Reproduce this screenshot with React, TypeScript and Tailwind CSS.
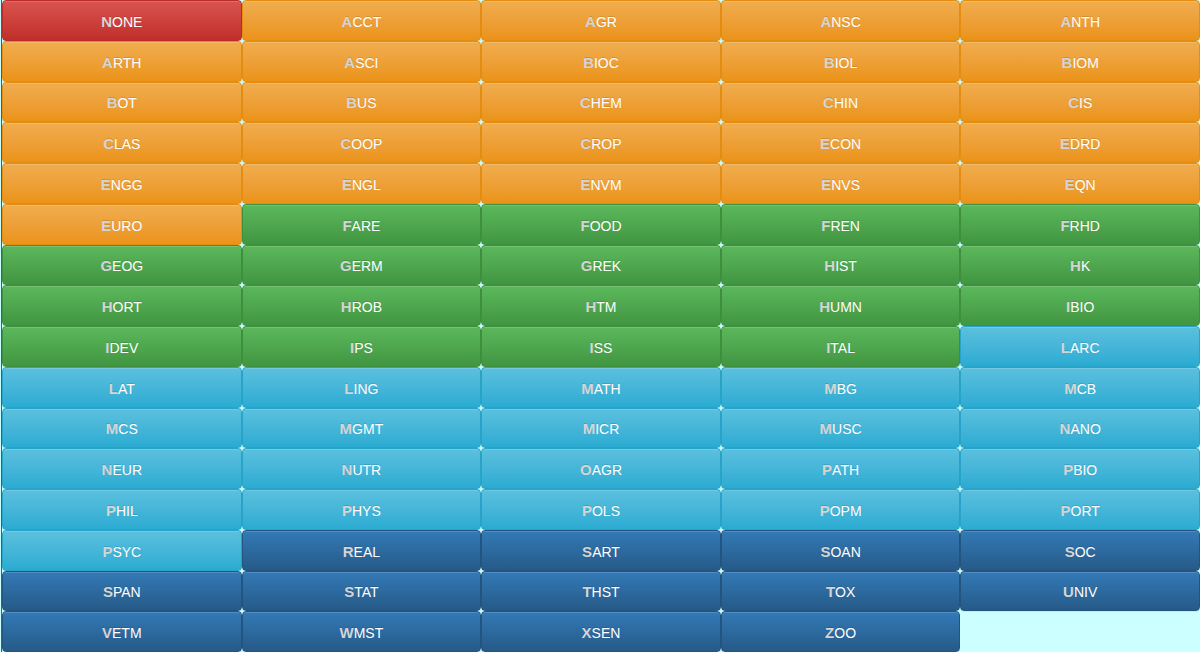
const groups: { cls: string; items: string[] }[] = [
  {
    cls: 'bg-gradient-to-b from-[#d9534f] to-[#c12e2a] border-[#b92c28]',
    items: ['NONE'],
  },
  {
    cls: 'bg-gradient-to-b from-[#f0ad4e] to-[#eb9316] border-[#e38d13]',
    items: [
      'ACCT', 'AGR', 'ANSC', 'ANTH', 'ARTH', 'ASCI', 'BIOC', 'BIOL', 'BIOM', 'BOT',
      'BUS', 'CHEM', 'CHIN', 'CIS', 'CLAS', 'COOP', 'CROP', 'ECON', 'EDRD', 'ENGG',
      'ENGL', 'ENVM', 'ENVS', 'EQN', 'EURO',
    ],
  },
  {
    cls: 'bg-gradient-to-b from-[#5cb85c] to-[#419641] border-[#3e8f3e]',
    items: [
      'FARE', 'FOOD', 'FREN', 'FRHD', 'GEOG', 'GERM', 'GREK', 'HIST', 'HK', 'HORT',
      'HROB', 'HTM', 'HUMN', 'IBIO', 'IDEV', 'IPS', 'ISS', 'ITAL',
    ],
  },
  {
    cls: 'bg-gradient-to-b from-[#5bc0de] to-[#2aabd2] border-[#28a4c9]',
    items: [
      'LARC', 'LAT', 'LING', 'MATH', 'MBG', 'MCB', 'MCS', 'MGMT', 'MICR', 'MUSC',
      'NANO', 'NEUR', 'NUTR', 'OAGR', 'PATH', 'PBIO', 'PHIL', 'PHYS', 'POLS', 'POPM',
      'PORT', 'PSYC',
    ],
  },
  {
    cls: 'bg-gradient-to-b from-[#337ab7] to-[#265a88] border-[#245580]',
    items: [
      'REAL', 'SART', 'SOAN', 'SOC', 'SPAN', 'STAT', 'THST', 'TOX', 'UNIV', 'VETM',
      'WMST', 'XSEN', 'ZOO',
    ],
  },
];

const subjects = groups.flatMap((g) => g.items.map((name) => ({ name, cls: g.cls })));

function SubjectButton({ name, cls }: { name: string; cls: string }) {
  return (
    <button
      className={`${cls} flex items-center justify-center pt-[2px] rounded-[4px] border text-white text-[14px] leading-none [text-shadow:0_-1px_0_rgba(0,0,0,0.12)] shadow-[inset_0_1px_0_rgba(255,255,255,0.15),0_1px_1px_rgba(0,0,0,0.075)]`}
    >
      <span>
        <span className="text-[#d4d4d4] text-[15px] font-bold">{name[0]}</span>
        {name.slice(1)}
      </span>
    </button>
  );
}

export default function App() {
  return (
    <div
      className="w-[1200px] h-[652px] overflow-hidden bg-[#ccffff]"
      style={{ fontFamily: '"Liberation Sans", Arial, sans-serif' }}
    >
      <div className="ml-px h-full border-l border-[#e0201a] grid grid-cols-5 grid-rows-16">
        {subjects.map((s) => (
          <SubjectButton key={s.name} name={s.name} cls={s.cls} />
        ))}
      </div>
    </div>
  );
}
